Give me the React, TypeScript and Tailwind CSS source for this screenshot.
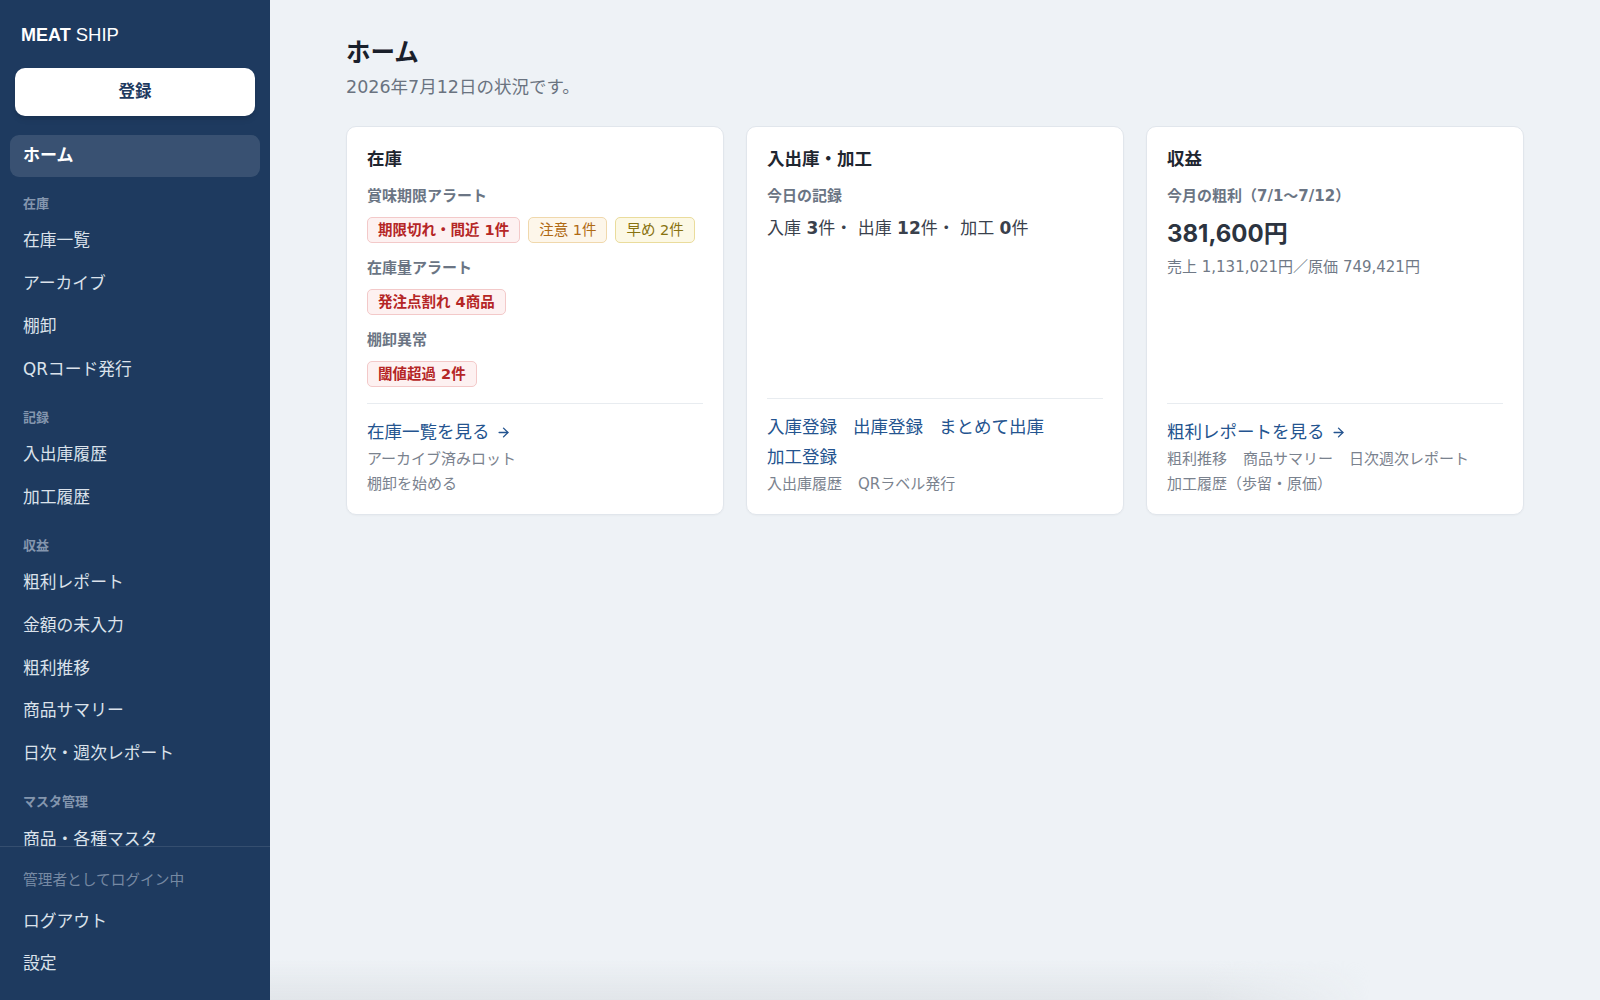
import React from 'react'
import { ArrowRight } from 'lucide-react'

type NavEntry = { label: string; section?: boolean; active?: boolean }

const navEntries: NavEntry[] = [
  { label: 'ホーム', active: true },
  { label: '在庫', section: true },
  { label: '在庫一覧' },
  { label: 'アーカイブ' },
  { label: '棚卸' },
  { label: 'QRコード発行' },
  { label: '記録', section: true },
  { label: '入出庫履歴' },
  { label: '加工履歴' },
  { label: '収益', section: true },
  { label: '粗利レポート' },
  { label: '金額の未入力' },
  { label: '粗利推移' },
  { label: '商品サマリー' },
  { label: '日次・週次レポート' },
  { label: 'マスタ管理', section: true },
  { label: '商品・各種マスタ' },
]

const Sidebar: React.FC = () => (
  <aside className="w-[270px] shrink-0 h-screen bg-[#1e3a5f] flex flex-col">
    {/* Logo */}
    <div className="px-[21px] pt-[23px] text-[18px] leading-6 text-white font-['Liberation_Sans',sans-serif]">
      <span className="font-extrabold">MEAT</span> <span className="text-[18.5px]">SHIP</span>
    </div>

    {/* Register */}
    <div className="px-[15px] mt-[21px]">
      <button className="w-full h-12 rounded-[10px] bg-white text-[#1e3a5f] text-[16.5px] font-bold shadow-md">
        登録
      </button>
    </div>

    {/* Nav */}
    <nav className="mt-[19px] flex-1 min-h-0 overflow-hidden">
      {navEntries.map((item) =>
        item.section ? (
          <div
            key={item.label}
            className="px-[23px] pt-[18px] pb-[6.5px] text-[13px] leading-[18px] font-bold text-[#8496ae]"
          >
            {item.label}
          </div>
        ) : item.active ? (
          <div
            key={item.label}
            className="mx-[10px] h-[42px] rounded-[9px] bg-white/12 flex items-center px-[13px] text-[17px] font-bold text-white"
          >
            {item.label}
          </div>
        ) : (
          <div
            key={item.label}
            className="mx-[10px] h-[42.8px] flex items-center px-[13px] text-[16.8px] text-[#dbe2eb]"
          >
            {item.label}
          </div>
        )
      )}
    </nav>

    {/* Footer */}
    <div className="border-t border-white/10 pb-[15px]">
      <div className="px-[23px] pt-[23px] pb-[11px] text-[14.7px] leading-5 text-[#7689a3]">
        管理者としてログイン中
      </div>
      <div className="mx-[10px] h-[42px] flex items-center px-[13px] text-[16.8px] text-[#dbe2eb]">
        ログアウト
      </div>
      <div className="mx-[10px] h-[42px] flex items-center px-[13px] text-[16.8px] text-[#dbe2eb]">
        設定
      </div>
    </div>
  </aside>
)

const Badge: React.FC<{ tone: 'red' | 'orange' | 'yellow'; children: React.ReactNode }> = ({ tone, children }) => {
  const tones = {
    red: 'bg-[#fdf1f1] border-[#f3c9c9] text-[#b52626] font-bold',
    orange: 'bg-[#fdf6ea] border-[#f0d8ac] text-[#b06a14]',
    yellow: 'bg-[#fcf8e5] border-[#eadc9c] text-[#88720f]',
  }
  return (
    <span className={`inline-block border rounded-[5px] px-2.5 py-[2px] text-[14.5px] leading-5 ${tones[tone]}`}>
      {children}
    </span>
  )
}

const AlertGroup: React.FC<{ label: string; children: React.ReactNode }> = ({ label, children }) => (
  <div className="mt-[15px]">
    <div className="text-[15px] leading-5 font-bold text-[#6b7584]">{label}</div>
    <div className="mt-[11px] flex flex-wrap gap-2">{children}</div>
  </div>
)

const FooterLink: React.FC<{ label: string; arrow?: boolean }> = ({ label, arrow }) => (
  <a href="#" onClick={(e) => e.preventDefault()} className="inline-flex items-center gap-1.5">
    {label}
    {arrow && <ArrowRight size={15} strokeWidth={2.2} />}
  </a>
)

const CardFooter: React.FC<{ links: string[]; arrow?: boolean; subs: string[]; stacked?: boolean }> = ({
  links,
  arrow,
  subs,
  stacked,
}) => (
  <div className="mt-auto pt-4 border-t border-[#e8ecf0]">
    <div className="flex flex-wrap gap-x-4 gap-y-1.5 text-[17.5px] leading-6 text-[#24548f]">
      {links.map((l) => (
        <FooterLink key={l} label={l} arrow={arrow} />
      ))}
    </div>
    <div
      className={`mt-[3px] ${stacked ? 'flex flex-col' : 'flex flex-wrap gap-x-4'} text-[15px] leading-[25px] text-[#7a828e]`}
    >
      {subs.map((s) => (
        <span key={s}>{s}</span>
      ))}
    </div>
  </div>
)

const Card: React.FC<{ title: string; children: React.ReactNode }> = ({ title, children }) => (
  <div className="bg-white border border-[#e1e6ec] rounded-[10px] px-5 pt-5 pb-[17px] flex flex-col shadow-[0_1px_2px_rgba(15,23,42,0.03)]">
    <h2 className="text-[17.5px] leading-6 font-bold text-[#1f2630]">{title}</h2>
    {children}
  </div>
)

export default function App() {
  return (
    <div className="flex h-screen overflow-hidden font-['DejaVu_Sans','Noto_Sans_CJK_JP',sans-serif]">
      <Sidebar />

      <main className="flex-1 h-screen overflow-hidden bg-[#eef2f6] relative">
        <div className="max-w-[1178px] mx-auto pt-[37px]">
          <h1 className="text-[24.5px] leading-8 font-bold text-[#1a202b]">ホーム</h1>
          <p className="mt-[6px] text-[17.5px] leading-6 text-[#6a7380]">2026年7月12日の状況です。</p>

          <div className="mt-[27px] grid grid-cols-3 gap-[22px]">
            {/* 在庫 */}
            <Card title="在庫">
              <AlertGroup label="賞味期限アラート">
                <Badge tone="red">期限切れ・間近 1件</Badge>
                <Badge tone="orange">注意 1件</Badge>
                <Badge tone="yellow">早め 2件</Badge>
              </AlertGroup>
              <AlertGroup label="在庫量アラート">
                <Badge tone="red">発注点割れ 4商品</Badge>
              </AlertGroup>
              <AlertGroup label="棚卸異常">
                <Badge tone="red">閾値超過 2件</Badge>
              </AlertGroup>
              <div className="h-4" />
              <CardFooter links={['在庫一覧を見る']} arrow subs={['アーカイブ済みロット', '棚卸を始める']} stacked />
            </Card>

            {/* 入出庫・加工 */}
            <Card title="入出庫・加工">
              <div className="mt-[15px] text-[15px] leading-5 font-bold text-[#6b7584]">今日の記録</div>
              <div className="mt-[10px] text-[17px] leading-6 text-[#3a414c]">
                入庫 <b>3</b>件・ 出庫 <b>12</b>件・ 加工 <b>0</b>件
              </div>
              <div className="h-4" />
              <CardFooter
                links={['入庫登録', '出庫登録', 'まとめて出庫', '加工登録']}
                subs={['入出庫履歴', 'QRラベル発行']}
              />
            </Card>

            {/* 収益 */}
            <Card title="収益">
              <div className="mt-[15px] text-[15px] leading-5 font-bold text-[#6b7584]">
                今月の粗利（7/1〜7/12）
              </div>
              <div className="mt-3 text-[24px] leading-8 font-bold text-[#2c3440] font-['Inter','Noto_Sans_CJK_JP',sans-serif]">
                381,600円
              </div>
              <div className="mt-1.5 text-[15px] leading-[22px] text-[#707986]">
                売上 1,131,021円／原価 749,421円
              </div>
              <div className="h-4" />
              <CardFooter
                links={['粗利レポートを見る']}
                arrow
                subs={['粗利推移', '商品サマリー', '日次週次レポート', '加工履歴（歩留・原価）']}
              />
            </Card>
          </div>
        </div>

        {/* bottom fade */}
        <div className="pointer-events-none absolute bottom-0 left-0 w-[1100px] h-10 bg-linear-to-t from-[#e1e5e9] to-transparent [mask-image:linear-gradient(to_right,#000_85%,transparent)]" />
      </main>
    </div>
  )
}
